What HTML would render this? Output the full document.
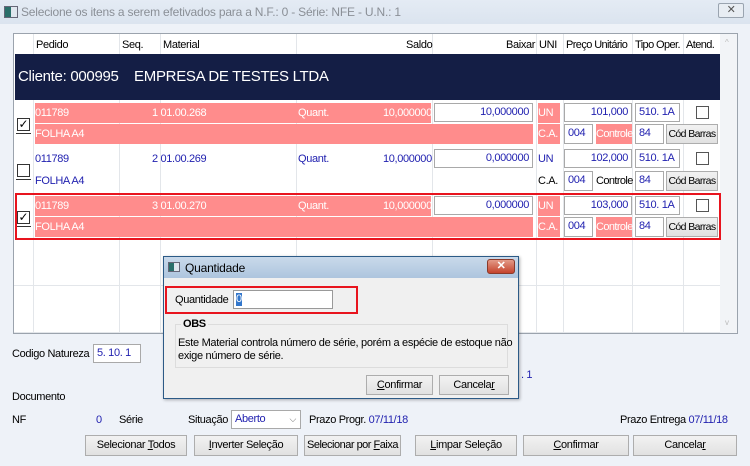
<!DOCTYPE html>
<html><head><meta charset="utf-8"><style>
*{margin:0;padding:0;box-sizing:border-box}
body{width:750px;height:466px;position:relative;overflow:hidden;background:#eef2f8;font-family:"Liberation Sans",sans-serif;font-size:11px;letter-spacing:-0.35px;color:#000}
.a{position:absolute;white-space:nowrap}
.in{position:absolute;background:#fff;border:1px solid #a9a9a9;color:#2222b0;font-size:11px;padding:2px 3px;line-height:13px;white-space:nowrap;overflow:hidden}
.pk{position:absolute;background:#ff8c8c}
.w{color:#fff}
.b{color:#2222b0}
.btn{position:absolute;background:linear-gradient(#f2f2f2,#e1e1e1);border:1px solid #adadad;text-align:center;font-size:11px;line-height:18px;white-space:nowrap;overflow:hidden}
.cb{position:absolute;width:13px;height:13px;border:1px solid #333;background:#fff;font-size:12px;line-height:11px;text-align:center;letter-spacing:0}
.ul{position:absolute;width:15px;height:1px;background:#333}
.vl{position:absolute;width:1px;background:#e3e6ea}
</style></head><body>
<!-- title bar -->
<div class="a" style="left:0;top:0;width:750px;height:24px;background:linear-gradient(#e4ebf4,#dbe4ef)"></div>
<div class="a" style="left:4px;top:6px;width:14px;height:12px;border:1px solid #667;background:linear-gradient(90deg,#2a6f6a 50%,#dfe6ee 50%)"></div>
<div class="a" style="left:21px;top:5px;font-size:12px;letter-spacing:-0.2px;color:#8a8f96">Selecione os itens a serem efetivados para a N.F.: 0 - Série: NFE - U.N.: 1</div>
<div class="a" style="left:718px;top:3px;width:26px;height:15px;border:1px solid #9aa4b0;border-radius:2px;background:#e8edf3;text-align:center;font-size:11px;line-height:13px;color:#555">✕</div>

<!-- grid -->
<div class="a" style="left:13px;top:33px;width:725px;height:301px;background:#fff;border:1px solid #9ba3ad"></div>
<div class="a" style="left:720px;top:34px;width:17px;height:299px;background:#f2f4f7"></div>
<div class="a" style="left:725px;top:38px;font-size:8px;color:#bbb">^</div>
<div class="a" style="left:725px;top:318px;font-size:8px;color:#bbb">v</div>
<div class="vl" style="left:33px;top:34px;height:299px"></div>
<div class="vl" style="left:119px;top:34px;height:299px"></div>
<div class="vl" style="left:160px;top:34px;height:299px"></div>
<div class="vl" style="left:296px;top:34px;height:299px"></div>
<div class="vl" style="left:432px;top:34px;height:299px"></div>
<div class="vl" style="left:536px;top:34px;height:299px"></div>
<div class="vl" style="left:563px;top:34px;height:299px"></div>
<div class="vl" style="left:632px;top:34px;height:299px"></div>
<div class="vl" style="left:683px;top:34px;height:299px"></div>
<div class="a" style="left:14px;top:285px;width:706px;height:1px;background:#e3e6ea"></div>
<div class="a" style="left:14px;top:332px;width:706px;height:1px;background:#e3e6ea"></div>
<div class="a" style="left:36px;top:39px">Pedido</div>
<div class="a" style="left:122px;top:39px">Seq.</div>
<div class="a" style="left:163px;top:39px">Material</div>
<div class="a" style="left:406px;top:39px">Saldo</div>
<div class="a" style="left:506px;top:39px">Baixar</div>
<div class="a" style="left:539px;top:39px">UNI</div>
<div class="a" style="left:566px;top:39px;letter-spacing:-0.6px">Preço Unitário</div>
<div class="a" style="left:635px;top:39px;letter-spacing:-0.6px">Tipo Oper.</div>
<div class="a" style="left:686px;top:39px;letter-spacing:-0.6px">Atend.</div>
<div class="a" style="left:15px;top:54px;width:705px;height:46px;background:#141e45"></div>
<div class="a" style="left:18px;top:68px;color:#fff;font-size:15px;letter-spacing:-0.3px">Cliente: 000995 &nbsp;&nbsp; EMPRESA DE TESTES LTDA</div>

<!-- row 1 -->
<div class="pk" style="left:35px;top:103px;width:396px;height:20px"></div>
<div class="pk" style="left:35px;top:124px;width:498px;height:20px"></div>
<div class="pk" style="left:538px;top:103px;width:22px;height:20px"></div>
<div class="pk" style="left:538px;top:124px;width:22px;height:20px"></div>
<div class="pk" style="left:596px;top:124px;width:36px;height:20px"></div>
<div class="a w" style="left:35px;top:107px">011789</div>
<div class="a w" style="left:152px;top:107px">1 01.00.268</div>
<div class="a w" style="left:298px;top:107px">Quant.</div>
<div class="a w" style="left:383px;top:107px">10,000000</div>
<div class="a w" style="left:35px;top:128px">FOLHA A4</div>
<div class="in" style="left:434px;top:103px;width:99px;height:19px;text-align:right">10,000000</div>
<div class="a w" style="left:538px;top:107px">UN</div>
<div class="in" style="left:564px;top:103px;width:68px;height:19px;text-align:right">101,000</div>
<div class="in" style="left:635px;top:103px;width:45px;height:19px">510. 1A</div>
<div class="cb" style="left:696px;top:106px;border-color:#555"></div>
<div class="a w" style="left:538px;top:128px">C.A.</div>
<div class="in" style="left:564px;top:124px;width:29px;height:20px">004</div>
<div class="a w" style="left:596px;top:128px;letter-spacing:-0.6px">Controle</div>
<div class="in" style="left:635px;top:124px;width:29px;height:20px">84</div>
<div class="btn" style="left:666px;top:124px;width:52px;height:20px;font-size:10.5px;letter-spacing:-0.6px">Cód Barras</div>
<div class="cb" style="left:17px;top:118px">✓</div><div class="ul" style="left:16px;top:133px"></div>

<!-- row 2 -->
<div class="a b" style="left:35px;top:153px">011789</div>
<div class="a b" style="left:152px;top:153px">2 01.00.269</div>
<div class="a b" style="left:298px;top:153px">Quant.</div>
<div class="a b" style="left:383px;top:153px">10,000000</div>
<div class="a b" style="left:35px;top:175px">FOLHA A4</div>
<div class="in" style="left:434px;top:149px;width:99px;height:19px;text-align:right">0,000000</div>
<div class="a b" style="left:538px;top:153px">UN</div>
<div class="in" style="left:564px;top:149px;width:68px;height:19px;text-align:right">102,000</div>
<div class="in" style="left:635px;top:149px;width:45px;height:19px">510. 1A</div>
<div class="cb" style="left:696px;top:152px;border-color:#555"></div>
<div class="a" style="left:538px;top:175px">C.A.</div>
<div class="in" style="left:564px;top:171px;width:29px;height:20px">004</div>
<div class="a" style="left:596px;top:175px;letter-spacing:-0.6px">Controle</div>
<div class="in" style="left:635px;top:171px;width:29px;height:20px">84</div>
<div class="btn" style="left:666px;top:171px;width:52px;height:20px;font-size:10.5px;letter-spacing:-0.6px">Cód Barras</div>
<div class="cb" style="left:17px;top:164px"></div><div class="ul" style="left:16px;top:179px"></div>

<!-- row 3 -->
<div class="pk" style="left:35px;top:196px;width:396px;height:20px"></div>
<div class="pk" style="left:35px;top:217px;width:498px;height:20px"></div>
<div class="pk" style="left:538px;top:196px;width:22px;height:20px"></div>
<div class="pk" style="left:538px;top:217px;width:22px;height:20px"></div>
<div class="pk" style="left:596px;top:217px;width:36px;height:20px"></div>
<div class="a w" style="left:35px;top:200px">011789</div>
<div class="a w" style="left:152px;top:200px">3 01.00.270</div>
<div class="a w" style="left:298px;top:200px">Quant.</div>
<div class="a w" style="left:383px;top:200px">10,000000</div>
<div class="a w" style="left:35px;top:221px">FOLHA A4</div>
<div class="in" style="left:434px;top:196px;width:99px;height:19px;text-align:right">0,000000</div>
<div class="a w" style="left:538px;top:200px">UN</div>
<div class="in" style="left:564px;top:196px;width:68px;height:19px;text-align:right">103,000</div>
<div class="in" style="left:635px;top:196px;width:45px;height:19px">510. 1A</div>
<div class="cb" style="left:696px;top:199px;border-color:#555"></div>
<div class="a w" style="left:538px;top:221px">C.A.</div>
<div class="in" style="left:564px;top:217px;width:29px;height:20px">004</div>
<div class="a w" style="left:596px;top:221px;letter-spacing:-0.6px">Controle</div>
<div class="in" style="left:635px;top:217px;width:29px;height:20px">84</div>
<div class="btn" style="left:666px;top:217px;width:52px;height:20px;font-size:10.5px;letter-spacing:-0.6px">Cód Barras</div>
<div class="cb" style="left:17px;top:211px">✓</div><div class="ul" style="left:16px;top:226px"></div>
<div class="a" style="left:15px;top:193px;width:706px;height:47px;border:2px solid #e8141e"></div>

<!-- bottom -->
<div class="a" style="left:12px;top:348px">Codigo Natureza</div>
<div class="in" style="left:93px;top:344px;width:48px;height:19px">5. 10. 1</div>
<div class="a b" style="left:521px;top:369px">. 1</div>
<div class="a" style="left:12px;top:391px">Documento</div>
<div class="a" style="left:12px;top:414px">NF</div>
<div class="a b" style="left:96px;top:414px">0</div>
<div class="a" style="left:119px;top:414px">Série</div>
<div class="a" style="left:188px;top:414px">Situação</div>
<div class="in" style="left:231px;top:410px;width:70px;height:19px">Aberto<span style="position:absolute;right:4px;color:#666;font-size:9px">⌵</span></div>
<div class="a" style="left:309px;top:414px">Prazo Progr. <span class="b">07/11/18</span></div>
<div class="a" style="left:620px;top:414px">Prazo Entrega <span class="b">07/11/18</span></div>
<div class="btn" style="left:85px;top:435px;width:102px;height:21px">Selecionar <u>T</u>odos</div>
<div class="btn" style="left:194px;top:435px;width:104px;height:21px"><u>I</u>nverter Seleção</div>
<div class="btn" style="left:304px;top:435px;width:97px;height:21px;letter-spacing:-0.5px">Selecionar por <u>F</u>aixa</div>
<div class="btn" style="left:415px;top:435px;width:102px;height:21px"><u>L</u>impar Seleção</div>
<div class="btn" style="left:523px;top:435px;width:106px;height:21px"><u>C</u>onfirmar</div>
<div class="btn" style="left:633px;top:435px;width:104px;height:21px">Cancela<u>r</u></div>

<!-- dialog -->
<div class="a" style="left:163px;top:256px;width:356px;height:143px;background:#f0f0f0;border:1px solid #2c5a86;box-shadow:1px 1px 3px rgba(0,0,0,.3)"></div>
<div class="a" style="left:164px;top:257px;width:354px;height:21px;background:linear-gradient(#c9d9ea,#adc5de)"></div>
<div class="a" style="left:168px;top:262px;width:12px;height:10px;border:1px solid #667;background:linear-gradient(90deg,#2a6f6a 50%,#dfe6ee 50%)"></div>
<div class="a" style="left:185px;top:261px;font-size:12px;letter-spacing:-0.2px">Quantidade</div>
<div class="a" style="left:487px;top:259px;width:28px;height:15px;border:1px solid #8a3a2a;border-radius:3px;background:linear-gradient(#e39a88,#c5432c);color:#fff;text-align:center;font-size:11px;line-height:13px;font-weight:bold">✕</div>
<div class="a" style="left:165px;top:286px;width:193px;height:28px;border:2px solid #e8141e"></div>
<div class="a" style="left:175px;top:294px">Quantidade</div>
<div class="a" style="left:233px;top:290px;width:100px;height:19px;background:#fff;border:1px solid #999"></div>
<div class="a" style="left:236px;top:293px;width:6px;height:13px;background:#3377cc;color:#fff;font-size:11px;line-height:13px">0</div>
<div class="a" style="left:175px;top:324px;width:333px;height:44px;border:1px solid #dcdcdc"></div>
<div class="a" style="left:181px;top:318px;padding:0 2px;background:#f0f0f0;font-weight:bold">OBS</div>
<div class="a" style="left:178px;top:337px;line-height:13px;letter-spacing:-0.3px">Este Material controla número de série, porém a espécie de estoque não<br>exige número de série.</div>
<div class="btn" style="left:366px;top:375px;width:67px;height:20px"><u>C</u>onfirmar</div>
<div class="btn" style="left:439px;top:375px;width:70px;height:20px">Cancela<u>r</u></div>
</body></html>
